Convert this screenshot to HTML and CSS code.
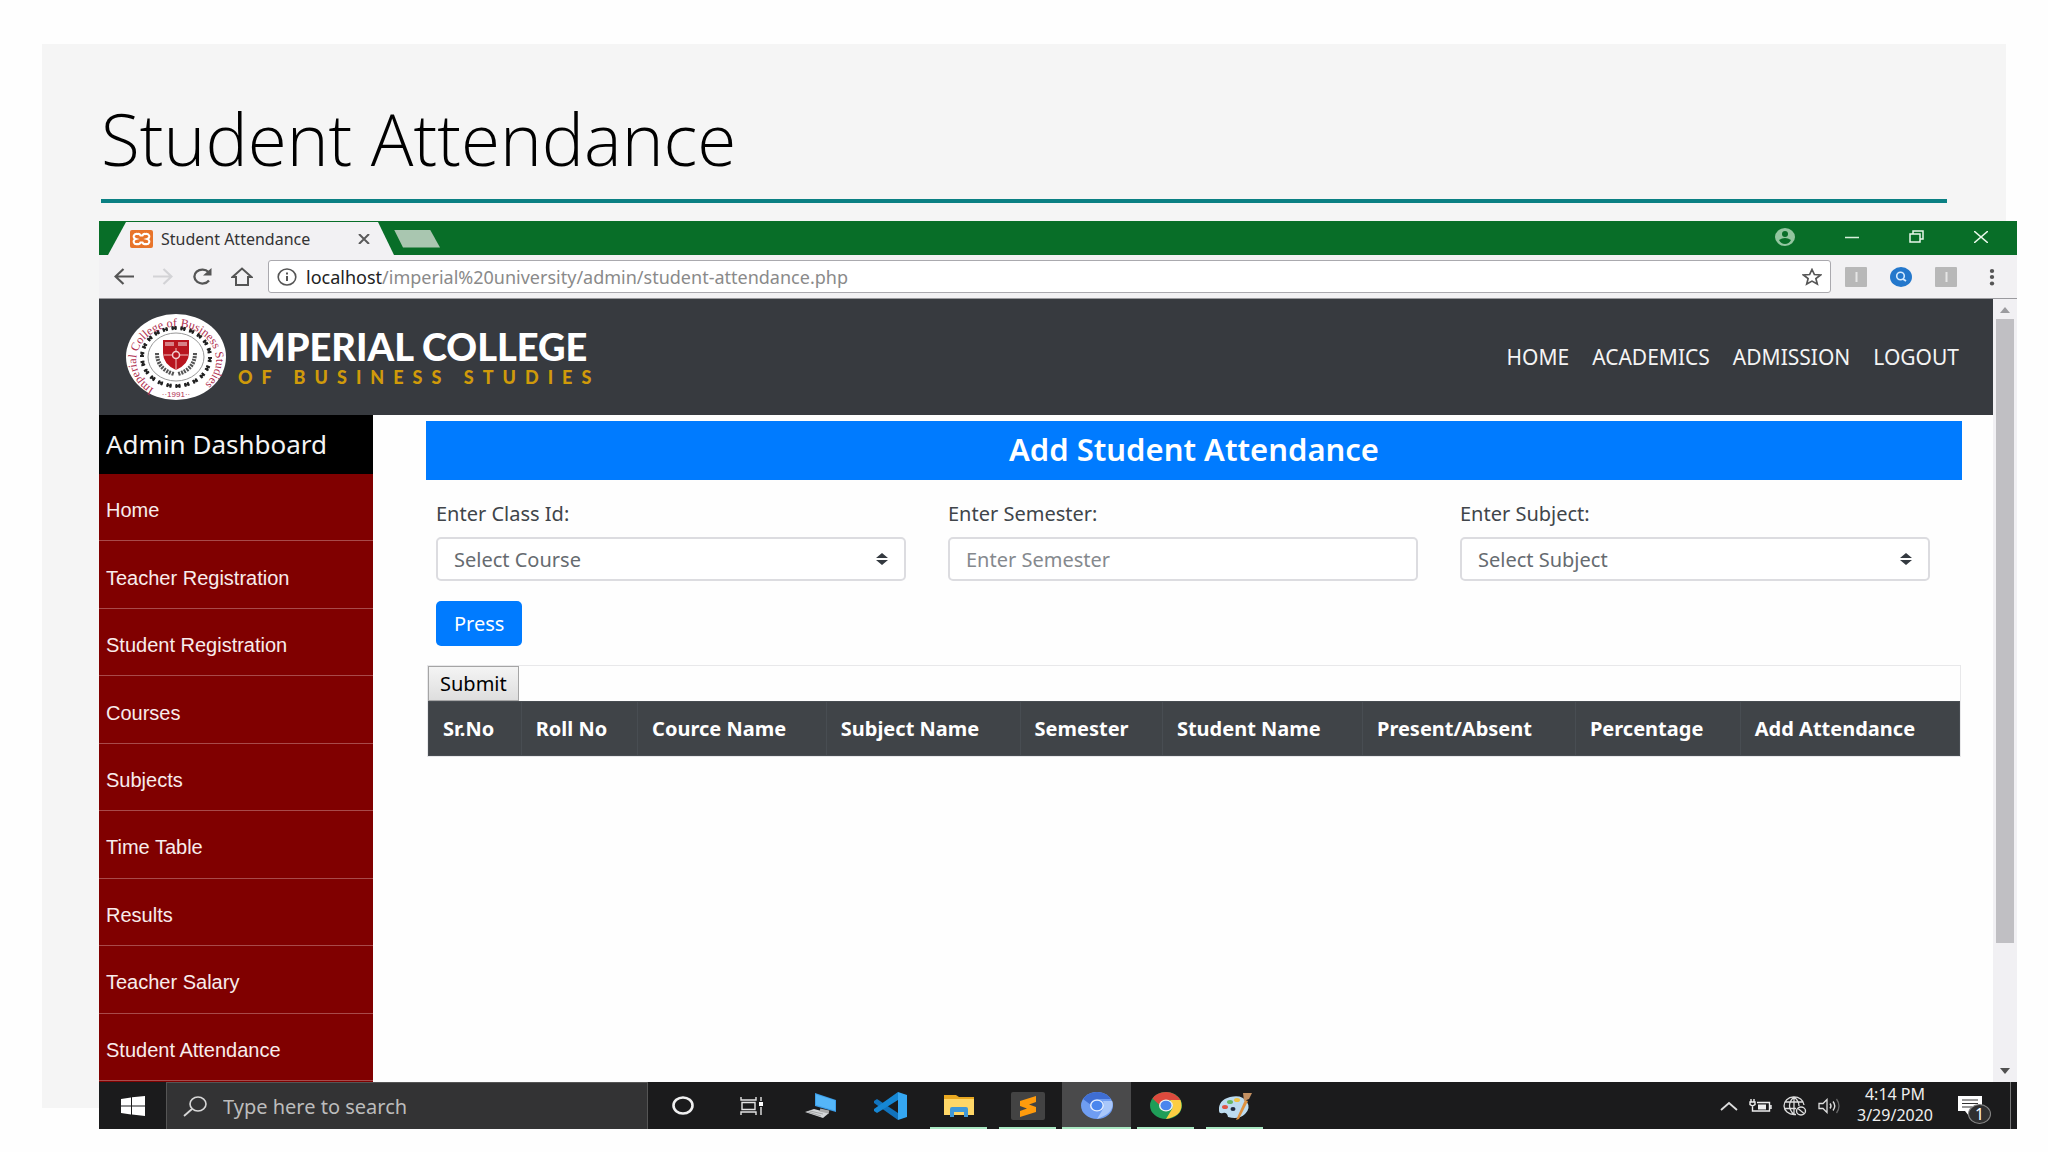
FILE: index.html
```html
<!DOCTYPE html>
<html lang="en">
<head>
  <meta charset="UTF-8" />
  <title>Student Attendance</title>
  <link rel="stylesheet" href="styles.css">
</head>
<body>
  <div class="paper"></div>
  <main class="slide">
    <h1 class="slide-title">Student Attendance</h1>

    <div class="browser">
      <!-- tab strip -->
      <div class="tab-strip">
        <div class="tab">
          <svg class="favicon" viewBox="0 0 24 18" preserveAspectRatio="none">
            <rect width="24" height="18" rx="2" fill="#e8742a"/>
            <path d="M8 4a3 2.500 0 0 0-2 5a3 2.500 0 0 0 2 5q2 .5 3-1.500h2q1 2 3 1.500a3 2.500 0 0 0 2-5a3 2.500 0 0 0-2-5q-2-.5-3 1.500h-2Q10 3.500 8 4z" fill="none" stroke="#fff" stroke-width="2.200"/>
          </svg>
          <span>Student Attendance</span>
          <button class="icon-btn tab-close" aria-label="Close tab">
            <svg width="12" height="10" viewBox="0 0 12 10"><path d="M1 0l10 10M11 0L1 10" stroke="#5a5a5a" stroke-width="2"/></svg>
          </button>
        </div>
        <button class="new-tab" aria-label="New tab"></button>
        <div class="window-buttons">
          <button class="icon-btn" aria-label="Profile">
            <svg width="20" height="18" viewBox="0 0 20 18"><ellipse cx="10" cy="9" rx="10" ry="9" fill="#93c6a0"/><ellipse cx="10" cy="6" rx="3" ry="3" fill="#086e28"/><path d="M4 12q6-4 12 0q-2 4-6 4t-6-4z" fill="#086e28"/></svg>
          </button>
          <button class="icon-btn" aria-label="Minimize">
            <svg width="14" height="12" viewBox="0 0 14 12"><path d="M0 6.500h14" stroke="#d8f0dc" stroke-width="1.500"/></svg>
          </button>
          <button class="icon-btn" aria-label="Restore">
            <svg width="15" height="13" viewBox="0 0 15 13"><path d="M1 4h10v8H1zM4 4V1h10v8h-3" fill="none" stroke="#e8f8ea" stroke-width="1.500"/></svg>
          </button>
          <button class="icon-btn" aria-label="Close">
            <svg width="14" height="12" viewBox="0 0 14 12"><path d="M0 0l14 12M14 0L0 12" stroke="#e8f8ea" stroke-width="1.500"/></svg>
          </button>
        </div>
      </div>

      <!-- address bar -->
      <div class="toolbar">
        <div class="nav-buttons">
          <button class="icon-btn" aria-label="Back">
            <svg width="20" height="17" viewBox="0 0 20 17"><path d="M20 8.500H2M9.500 1L1.500 8.500l8 7.500" fill="none" stroke="#555" stroke-width="2.200"/></svg>
          </button>
          <button class="icon-btn" aria-label="Forward">
            <svg width="20" height="17" viewBox="0 0 20 17"><path d="M0 8.500h18M10.500 1l8 7.500-8 7.500" fill="none" stroke="#d3d3d6" stroke-width="2.200"/></svg>
          </button>
          <button class="icon-btn" aria-label="Reload">
            <svg width="20" height="17" viewBox="0 0 20 17"><path d="M17 12.500A8 7 0 1 1 16.500 4" fill="none" stroke="#555" stroke-width="2.300"/><path d="M19.500 0v7.500H11z" fill="#555"/></svg>
          </button>
          <button class="icon-btn" aria-label="Home">
            <svg width="22" height="19" viewBox="0 0 22 19"><path d="M1.500 10L11 1.500l9.500 8.500H17v8H5v-8z" fill="none" stroke="#555" stroke-width="2"/></svg>
          </button>
        </div>
        <div class="address">
          <svg width="20" height="18" viewBox="0 0 20 18"><ellipse cx="10" cy="9" rx="8.800" ry="8" fill="none" stroke="#555" stroke-width="1.600"/><path d="M10 8v5M10 4.500v2" stroke="#555" stroke-width="2"/></svg>
          <span class="url"><b>localhost</b>/imperial%20university/admin/student-attendance.php</span>
          <svg width="20" height="18" viewBox="0 0 20 18"><path d="M10 1.500l2.400 5 6.100.5-4.600 3.600 1.400 5.400-5.300-2.900L4.700 16l1.400-5.400L1.500 7l6.100-.5z" fill="none" stroke="#555" stroke-width="1.700"/></svg>
        </div>
        <div class="extensions">
          <svg width="22" height="20" viewBox="0 0 22 20"><rect width="22" height="20" rx="1" fill="#b8b8b8"/><path d="M11.500 5v10" stroke="#e6e6e6" stroke-width="2"/></svg>
          <svg width="22" height="20" viewBox="0 0 22 20"><ellipse cx="11" cy="10" rx="11" ry="10" fill="#2478cc"/><circle cx="10.500" cy="9" r="3.800" fill="none" stroke="#d5ebff" stroke-width="1.600"/><path d="M13 12l3 2" stroke="#d5ebff" stroke-width="1.800"/></svg>
          <svg width="22" height="20" viewBox="0 0 22 20"><rect width="22" height="20" rx="1" fill="#b8b8b8"/><path d="M11.500 5v10" stroke="#e6e6e6" stroke-width="2"/></svg>
          <svg width="22" height="20" viewBox="0 0 22 20"><ellipse cx="12" cy="4" rx="2.200" ry="2" fill="#555"/><ellipse cx="12" cy="10" rx="2.200" ry="2" fill="#555"/><ellipse cx="12" cy="16.500" rx="2.200" ry="2" fill="#555"/></svg>
        </div>
      </div>

      <div class="viewport">
        <div class="site">
          <header class="site-header">
            <a href="#" class="brand">
              <svg class="seal" viewBox="0 0 100 86">
                <defs>
                  <path id="ring" d="M28 75A40 34 0 1 1 74 74"/>
                </defs>
                <ellipse cx="50" cy="43" rx="50" ry="43" fill="#fff"/>
                <text class="seal-text"><textPath href="#ring">Imperial College of Business Studies</textPath></text>
                <text class="seal-year" x="50" y="83" text-anchor="middle">··1991··</text>
                <ellipse cx="50" cy="43" rx="34" ry="29" fill="none" stroke="#222" stroke-width="4" stroke-dasharray="2 1 2 4"/>
                <ellipse cx="50" cy="43" rx="34" ry="29" fill="none" stroke="#222" stroke-width="2" stroke-dasharray="5 4"/>
                <ellipse cx="50" cy="43" rx="28" ry="24" fill="none" stroke="#999" stroke-width="1"/>
                <path d="M31 39q0 16 17 21M69 39q0 16-17 21" fill="none" stroke="#555" stroke-width="4" stroke-dasharray="2 1"/>
                <path d="M37 26h26v13q0 11-13 17q-13-6-13-17z" fill="#b8141e"/>
                <path d="M39 28h9v4h-9zM52 28h9v4h-9z" fill="#d78086"/>
                <path d="M50 34v22M38 41h24" stroke="#f0c0c0" stroke-width="1"/>
                <circle cx="50" cy="41" r="3.500" fill="#b8141e" stroke="#f3d0d0" stroke-width="1.500"/>
              </svg>
              <span class="brand-text">
                <span class="brand-name">IMPERIAL COLLEGE</span>
                <span class="brand-sub">OF BUSINESS STUDIES</span>
              </span>
            </a>
            <nav class="site-nav">
              <a href="#">HOME</a>
              <a href="#">ACADEMICS</a>
              <a href="#">ADMISSION</a>
              <a href="#">LOGOUT</a>
            </nav>
          </header>

          <div class="site-body">
            <aside class="sidebar">
              <h2>Admin Dashboard</h2>
              <a href="#">Home</a>
              <a href="#">Teacher Registration</a>
              <a href="#">Student Registration</a>
              <a href="#">Courses</a>
              <a href="#">Subjects</a>
              <a href="#">Time Table</a>
              <a href="#">Results</a>
              <a href="#">Teacher Salary</a>
              <a href="#">Student Attendance</a>
            </aside>

            <section class="content">
              <h3 class="banner">Add Student Attendance</h3>
              <form class="filters">
                <div class="field">
                  <label for="course">Enter Class Id:</label>
                  <div class="select-wrap">
                    <select id="course"><option>Select Course</option></select>
                    <svg width="12" height="12" viewBox="0 0 12 12"><path d="M6 0l6 5H0zM6 12l6-5H0z" fill="#343a40"/></svg>
                  </div>
                </div>
                <div class="field">
                  <label for="semester">Enter Semester:</label>
                  <input type="text" id="semester" placeholder="Enter Semester" />
                </div>
                <div class="field">
                  <label for="subject">Enter Subject:</label>
                  <div class="select-wrap">
                    <select id="subject"><option>Select Subject</option></select>
                    <svg width="12" height="12" viewBox="0 0 12 12"><path d="M6 0l6 5H0zM6 12l6-5H0z" fill="#343a40"/></svg>
                  </div>
                </div>
                <button type="button" class="press">Press</button>
              </form>

              <div class="records">
                <button type="button" class="submit">Submit</button>
                <table>
                  <thead>
                    <tr>
                      <th>Sr.No</th>
                      <th>Roll No</th>
                      <th>Cource Name</th>
                      <th>Subject Name</th>
                      <th>Semester</th>
                      <th>Student Name</th>
                      <th>Present/Absent</th>
                      <th>Percentage</th>
                      <th>Add Attendance</th>
                    </tr>
                  </thead>
                </table>
              </div>
            </section>
          </div>
        </div>

        <div class="scrollbar">
          <svg width="10" height="6" viewBox="0 0 10 6"><path d="M5 0l5 6H0z" fill="#9b9b9f"/></svg>
          <div class="track"><div class="thumb"></div></div>
          <svg width="10" height="6" viewBox="0 0 10 6"><path d="M5 6l5-6H0z" fill="#505050"/></svg>
        </div>
      </div>

      <!-- windows taskbar -->
      <footer class="taskbar">
        <button class="start" aria-label="Start">
          <svg width="24" height="20" viewBox="0 0 24 20"><path d="M0 3l10-1.500V9.500H0zM11 1.300L24 0v9.500H11zM0 10.500h10v8L0 17zM11 10.500h13V20l-13-1.500z" fill="#fff"/></svg>
        </button>
        <label class="search">
          <svg width="24" height="21" viewBox="0 0 24 21"><ellipse cx="15" cy="8" rx="8" ry="7" fill="none" stroke="#d8d8d8" stroke-width="1.600"/><path d="M9 13L1 20" stroke="#d8d8d8" stroke-width="1.800"/></svg>
          <input type="text" placeholder="Type here to search" aria-label="Search" />
        </label>
        <div class="apps">
          <button class="app" aria-label="Cortana">
            <svg width="22" height="19" viewBox="0 0 22 19"><ellipse cx="11" cy="9.500" rx="9.500" ry="8" fill="none" stroke="#f0f0f0" stroke-width="2.600"/></svg>
          </button>
          <button class="app" aria-label="Task view">
            <svg width="24" height="18" viewBox="0 0 24 18"><path d="M1 0v3h15V0M1 18v-3h15v3M2 5.500h13v7H2zM21 0v4M21 10v8" fill="none" stroke="#e4e4e4" stroke-width="1.400"/><path d="M19 5h4v4h-4z" fill="#fff"/></svg>
          </button>
          <button class="app" aria-label="Computer">
            <svg width="32" height="26" viewBox="0 0 32 26"><path d="M10 0l21 7v12l-21-6z" fill="#3d9ee8"/><path d="M11 1.500l19 6v10l-19-5.500z" fill="#55b6f8"/><path d="M0 19l9-3 15 4-6 5z" fill="#d4d6d8"/><path d="M15 17l9 2" stroke="#aaa" stroke-width="3"/><path d="M5 18l13 3M3 19l13 4" stroke="#999" stroke-width=".8"/></svg>
          </button>
          <button class="app" aria-label="VS Code">
            <svg width="34" height="28" viewBox="0 0 34 28"><path d="M1 9l3-2 21 14v7L1 11z" fill="#1173bd"/><path d="M1 19l3 2L25 8V0L1 17z" fill="#1687d4"/><path d="M25 0l9 3v22l-9 3z" fill="#35a7f2"/></svg>
          </button>
          <button class="app open" aria-label="File explorer">
            <svg width="30" height="22" viewBox="0 0 30 22"><path d="M0 0h12l3 2h15v18H0z" fill="#e9a820"/><path d="M0 4h30v16H0z" fill="#ffd767"/><path d="M6 22v-8q0-2 2-2h14q2 0 2 2v8h-4v-5H10v5z" fill="#3f98d8"/></svg>
          </button>
          <button class="app open" aria-label="Sublime Text">
            <svg width="34" height="28" viewBox="0 0 34 28"><rect width="34" height="28" rx="2" fill="#434343"/><path d="M9 9l16-5v6l-7 2.500 7 2.500v5L9 25v-6l7-2.500L9 14z" fill="#ff9b0c"/></svg>
          </button>
          <button class="app open active" aria-label="Chromium">
            <svg width="32" height="27" viewBox="0 0 32 27"><ellipse cx="16" cy="13.500" rx="16" ry="13.500" fill="#6f9df2"/><path d="M2 7Q7 0 16 0t14 7H16q-6 0-6 6z" fill="#3f6ed2"/><path d="M22 9h9.200q3 12-15.200 18l6-10q2-4 0-8z" fill="#a9c7fa"/><ellipse cx="16" cy="13.500" rx="7" ry="6" fill="#e4eefe"/><ellipse cx="16" cy="13.500" rx="5.500" ry="4.800" fill="#4a86ee"/></svg>
          </button>
          <button class="app open" aria-label="Chrome">
            <svg width="32" height="27" viewBox="0 0 32 27"><ellipse cx="16" cy="13.500" rx="16" ry="13.500" fill="#1f9d58"/><path d="M2.500 6.500Q7 0 16 0t14.500 8H16q-5 0-6.500 5z" fill="#dc4a3d"/><path d="M20 8h10.500q5 15-14.500 19l6-10q2-4-2-9z" fill="#fccd42"/><ellipse cx="16" cy="13.500" rx="7" ry="6" fill="#f1f1f1"/><ellipse cx="16" cy="13.500" rx="5.500" ry="4.800" fill="#4a86ee"/></svg>
          </button>
          <button class="app open" aria-label="Paint">
            <svg width="34" height="28" viewBox="0 0 34 28"><path d="M1 19Q0 8 12 5t17 5q4 6-2 12t-17 3q-1-5-5-4t-4-2z" fill="#bddcf0"/><ellipse cx="7" cy="15" rx="3" ry="2" fill="#e05545"/><ellipse cx="12" cy="10" rx="3" ry="2" fill="#67b867"/><ellipse cx="19" cy="8" rx="3" ry="2" fill="#f0c344"/><ellipse cx="15" cy="17" rx="2.500" ry="2" fill="#222c40"/><path d="M18 28l9-20 3 1-9 18z" fill="#dd9140"/><path d="M25 1l9 0-3 6-5 2z" fill="#c39062"/></svg>
          </button>
        </div>
        <div class="tray">
          <svg width="18" height="10" viewBox="0 0 18 10"><path d="M1 9l8-7 8 7" fill="none" stroke="#ddd" stroke-width="1.800"/></svg>
          <svg width="23" height="14" viewBox="0 0 23 14"><path d="M1 3h5v2.500L3.500 7L1 5.500zM2 3V0M5 3V0M3.500 7v5H8" fill="none" stroke="#eee" stroke-width="1.400"/><path d="M8 3.500h12.500v8.500H8M22 6v4" fill="none" stroke="#eee" stroke-width="1.400"/><path d="M9 5.500h8v5H9z" fill="#eee"/></svg>
          <svg width="24" height="20" viewBox="0 0 24 20"><path d="M13 18.500h-2A10 8.800 0 1 1 21 9M11 1q-9 8.500 0 17.500M11 1q5 4 5 9M2 6h18M1 12.500h12M11 1v17.500" fill="none" stroke="#ddd" stroke-width="1.300"/><ellipse cx="18" cy="15" rx="4.500" ry="4" fill="#1b1b1c" stroke="#ddd" stroke-width="1.400"/><path d="M15 12.500l6 5" stroke="#ddd" stroke-width="1.300"/></svg>
          <svg width="24" height="16" viewBox="0 0 24 16"><path d="M1 5.500h4l4-4v13l-4-4H1z" fill="none" stroke="#ddd" stroke-width="1.300"/><path d="M12 5.500q2 2.500 0 5M15 3.500q3.500 4.500 0 9" fill="none" stroke="#ddd" stroke-width="1.400"/><path d="M18.500 1q5 7 0 14" fill="none" stroke="#666" stroke-width="1.300"/></svg>
          <div class="clock"><span>4:14 PM</span><span>3/29/2020</span></div>
          <div class="notify">
            <svg width="24" height="20" viewBox="0 0 24 20"><path d="M0 0h24v15H11v5l-4-5H0z" fill="#fff"/><path d="M4 4h16M4 7.500h16M4 11h10" stroke="#333" stroke-width="1.200"/></svg>
            <span class="count">1</span>
          </div>
        </div>
      </footer>
    </div>
  </main>
</body>
</html>
```
FILE: styles.css
```css
:root {
  --green: #086e28;
  --dark: #373a3f;
  --blue: #007bff;
  --maroon: #800000;
  --ui: "Noto Sans", "Open Sans", sans-serif;
}

* {
  margin: 0;
  padding: 0;
  box-sizing: border-box;
}

body {
  display: grid;
  min-height: 100vh;
  background: #fefefe;
  font-family: var(--ui);
  font-size: 20px;
  color: #212529;
}

a {
  color: inherit;
  text-decoration: none;
}

button, input, select {
  font: inherit;
}

svg {
  display: block;
  flex: none;
}

/* paper and slide share one grid cell, the window hangs over the paper's edge */
.paper, .slide {
  grid-area: 1 / 1;
}

.paper {
  margin: 44px 42px;
  background: #f5f5f5;
}

.slide {
  position: relative;
  display: flex;
  flex-direction: column;
  padding: 88px 31px 23px 99px;
}

.slide-title {
  margin: 0 70px 18px 2px;
  padding-bottom: 9px;
  border-bottom: 4px solid #0b8083;
  font-family: "Open Sans", sans-serif;
  font-size: 71px;
  font-weight: 300;
  line-height: 102px;
  color: #000;
}

.browser {
  flex: 1;
  display: flex;
  flex-direction: column;
  background: #fefefe;
}

.icon-btn {
  display: flex;
  border: none;
  background: none;
}

/* tab strip */
.tab-strip {
  display: flex;
  align-items: center;
  height: 34px;
  padding: 1px 29px 0 9px;
  background: var(--green);
}

.tab {
  display: flex;
  align-items: center;
  gap: 8px;
  width: 286px;
  height: 33px;
  padding: 0 24px 0 22px;
  background: #f2f1f3;
  clip-path: polygon(18px 0, 270px 0, 286px 100%, 0 100%);
  font-size: 16px;
  line-height: 32px;
  color: #333;
}

.favicon {
  width: 23px;
  height: 18px;
}

.tab-close {
  margin-left: auto;
}

.new-tab {
  width: 46px;
  height: 18px;
  border: none;
  background: #a9c6b0;
  clip-path: polygon(0 0, 36px 0, 100% 100%, 9px 100%);
}

.window-buttons {
  display: flex;
  align-items: center;
  gap: 50px;
  margin-left: auto;
  padding-bottom: 4px;
}

/* toolbar */
.toolbar {
  display: flex;
  align-items: center;
  height: 44px;
  padding: 0 15px 0 15px;
  background: #f2f1f3;
  border-bottom: 1px solid #9a9a9e;
}

.nav-buttons {
  display: flex;
  align-items: center;
  gap: 19px;
}

.address {
  flex: 1;
  display: flex;
  align-items: center;
  gap: 9px;
  height: 33px;
  margin: 0 14px 0 15px;
  padding: 0 8px;
  border: 1px solid #aaa9ae;
  border-radius: 3px;
  background: #fff;
  font-size: 18px;
}

.url {
  flex: 1;
  color: #8a8a8a;
}

.url b {
  font-weight: 400;
  color: #222;
}

.extensions {
  display: flex;
  gap: 23px;
}

/* page */
.viewport {
  flex: 1;
  display: flex;
}

.site {
  flex: 1;
  display: flex;
  flex-direction: column;
}

.site-header {
  display: flex;
  justify-content: space-between;
  align-items: center;
  height: 116px;
  padding: 0 34px 0 27px;
  background: var(--dark);
}

.brand {
  display: flex;
  align-items: center;
  gap: 12px;
}

.seal {
  width: 100px;
  height: 86px;
}

.seal-text {
  font-family: "Liberation Serif", serif;
  font-size: 12px;
  fill: #b03050;
}

.seal-year {
  font-family: "Liberation Sans", sans-serif;
  font-size: 8px;
  fill: #b03050;
}

.brand-text {
  display: flex;
  flex-direction: column;
  font-family: Lato, sans-serif;
  font-weight: 900;
}

.brand-name {
  font-size: 38px;
  line-height: 40px;
  color: #fff;
}

.brand-sub {
  font-size: 18px;
  line-height: 22px;
  letter-spacing: 9px;
  color: #d09a0a;
}

.site-nav {
  display: flex;
  gap: 23px;
  font-size: 21px;
  color: #f4f4f4;
}

.site-body {
  flex: 1;
  display: flex;
}

.sidebar {
  display: flex;
  flex-direction: column;
  width: 274px;
  padding-bottom: 1px;
  background: var(--maroon);
}

.sidebar h2 {
  padding-left: 7px;
  background: #000;
  font-size: 26px;
  font-weight: 400;
  line-height: 59px;
  color: #f4f4f4;
}

.sidebar a {
  flex: 1;
  display: flex;
  align-items: center;
  padding: 7px 7px 0;
  border-bottom: 1px solid #a84a4a;
  font-family: "Liberation Sans", sans-serif;
  font-size: 20px;
  color: #f8ecec;
}

.content {
  flex: 1;
  padding: 6px 31px 0 53px;
}

.banner {
  padding-bottom: 2px;
  background: var(--blue);
  font-size: 31px;
  font-weight: 600;
  line-height: 57px;
  text-align: center;
  color: #fff;
}

.filters {
  display: grid;
  grid-template-columns: repeat(3, 1fr);
  row-gap: 20px;
  padding: 19px 0;
}

.field {
  padding: 0 32px 0 10px;
}

.field label {
  display: block;
  margin-bottom: 8px;
  line-height: 30px;
  color: #40454a;
}

.field input, .field select {
  display: block;
  width: 100%;
  height: 44px;
  padding: 0 16px;
  border: 2px solid #dcdce0;
  border-radius: 5px;
  background: #fff;
  color: #666b70;
  appearance: none;
}

.field input::placeholder {
  color: #85898e;
  opacity: 1;
}

.select-wrap {
  position: relative;
}

.select-wrap svg {
  position: absolute;
  top: 16px;
  right: 18px;
}

.press {
  justify-self: start;
  height: 45px;
  margin-left: 10px;
  padding: 0 18px;
  border: none;
  border-radius: 5px;
  background: var(--blue);
  color: #fff;
}

.records {
  margin: 0 1px;
  border: 1px solid #e8e8ea;
}

.submit {
  display: block;
  height: 35px;
  padding: 0 11px;
  border: 1px solid #a5a5a5;
  background: linear-gradient(#f4f4f4, #dedede);
  line-height: 30px;
}

table {
  width: 100%;
  border-collapse: collapse;
  background: #404448;
}

th {
  height: 54px;
  padding: 0 14px;
  border: 1px solid #484d52;
  font-weight: 700;
  font-size: 20px;
  text-align: left;
  white-space: nowrap;
  color: #fff;
}

.scrollbar {
  display: flex;
  flex-direction: column;
  align-items: center;
  width: 24px;
  padding: 8px 0;
  background: #f1f0f3;
}

.track {
  flex: 1;
  width: 18px;
  margin: 6px 0;
}

.thumb {
  height: 84%;
  background: #c0bfc3;
}

/* taskbar */
.taskbar {
  display: flex;
  height: 47px;
  background: #1b1b1c;
}

.start {
  display: flex;
  justify-content: center;
  align-items: center;
  width: 67px;
  border: none;
  background: none;
}

.search {
  display: flex;
  align-items: center;
  gap: 16px;
  width: 482px;
  padding: 0 16px;
  border: 1px solid #555;
  border-bottom: none;
  background: #333334;
}

.search input {
  flex: 1;
  border: none;
  background: none;
}

.search input::placeholder {
  color: #bcbcbc;
  opacity: 1;
}

.apps {
  display: flex;
}

.app {
  position: relative;
  display: flex;
  justify-content: center;
  align-items: center;
  width: 69px;
  border: none;
  background: none;
}

.app.active {
  background: #4a4a4b;
}

.app.open::after {
  content: "";
  position: absolute;
  bottom: 0;
  left: 6px;
  right: 6px;
  height: 2px;
  background: #a9e8c2;
}

.app.active::after {
  left: 0;
  right: 0;
}

.tray {
  display: flex;
  align-items: center;
  gap: 11px;
  margin-left: auto;
  margin-right: 6px;
  padding-right: 19px;
  border-right: 1px solid #777;
}

.clock {
  display: flex;
  flex-direction: column;
  width: 80px;
  margin-left: 2px;
  padding-bottom: 2px;
  font-size: 16px;
  line-height: 21px;
  text-align: center;
  color: #eee;
}

.notify {
  position: relative;
  margin: 0 9px 0 12px;
}

.count {
  position: absolute;
  top: 8px;
  left: 10px;
  width: 23px;
  border: 1px solid #888;
  border-radius: 50%;
  background: #303031;
  font-size: 16px;
  line-height: 18px;
  text-align: center;
  color: #fff;
}
```
